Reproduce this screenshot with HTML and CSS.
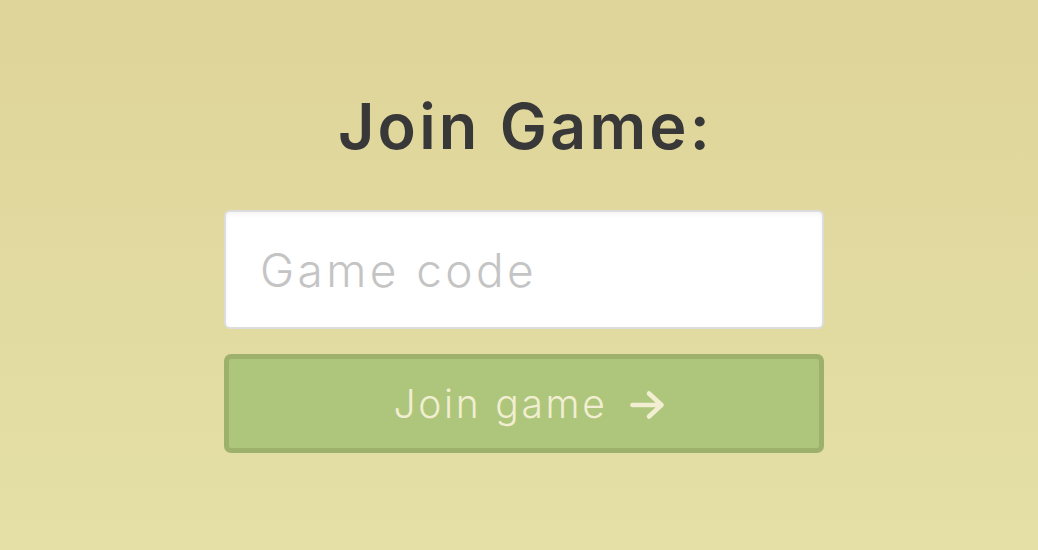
FILE: index.html
```html
<!DOCTYPE html>
<html lang="en">
<head>
<meta charset="utf-8">
<title>Join Game</title>
<link rel="stylesheet" href="styles.css">
</head>
<body>
<main class="page">
  <h1 class="title">Join Game:</h1>
  <form class="join-form">
    <input class="code-input" type="text" placeholder="Game code">
    <button class="join-btn" type="button">
      <span class="join-label">Join game</span>
      <svg class="arrow" width="36" height="30" viewBox="0 0 36 30" aria-hidden="true">
        <path d="M3.5 15 H32 M20 3.5 L32.5 15 L20 26.5" fill="none" stroke="currentColor" stroke-width="4.6" stroke-linecap="round" stroke-linejoin="round"/>
      </svg>
    </button>
  </form>
</main>
</body>
</html>
```
FILE: styles.css
```css
html, body {
  margin: 0;
  height: 100%;
}
body {
  background: linear-gradient(180deg, #dfd49a 0%, #e4e0a6 100%);
  font-family: "Inter", "Open Sans", sans-serif;
  color: #383838;
}
.page {
  display: flex;
  flex-direction: column;
  align-items: center;
  padding: 86px 0 0 10px;
  box-sizing: border-box;
}
.title {
  margin: 0;
  padding-left: 3px;
  font-size: 63px;
  font-weight: 600;
  line-height: 80px;
  color: #383838;
  letter-spacing: 3.2px;
}
.join-form {
  display: flex;
  flex-direction: column;
  gap: 25px;
  width: 600px;
  margin-top: 44px;
}
.code-input {
  box-sizing: border-box;
  height: 119px;
  width: 100%;
  border: 2px solid #dcdcdc;
  border-radius: 6px;
  background: #fff;
  box-shadow: inset 0 3px 4px rgba(0,0,0,0.04);
  padding: 0 0 0 34px;
  font-family: "Inter", "Open Sans", sans-serif;
  font-size: 46px;
  font-weight: 300;
  letter-spacing: 3.4px;
  color: #383838;
  outline: none;
}
.code-input::placeholder {
  color: #c4c4c4;
}
.join-btn {
  box-sizing: border-box;
  height: 99px;
  width: 100%;
  border: 5px solid #9db16d;
  border-radius: 7px;
  background: #adc67b;
  color: #f2eed2;
  display: flex;
  align-items: center;
  justify-content: center;
  gap: 21px;
  font-family: "Inter", "Open Sans", sans-serif;
  font-size: 39px;
  font-weight: 300;
  letter-spacing: 2.7px;
  padding: 0 0 0 10px;
  cursor: pointer;
}
.join-label {
  line-height: 1;
}
.arrow {
  display: block;
  margin-top: 2px;
}
```
